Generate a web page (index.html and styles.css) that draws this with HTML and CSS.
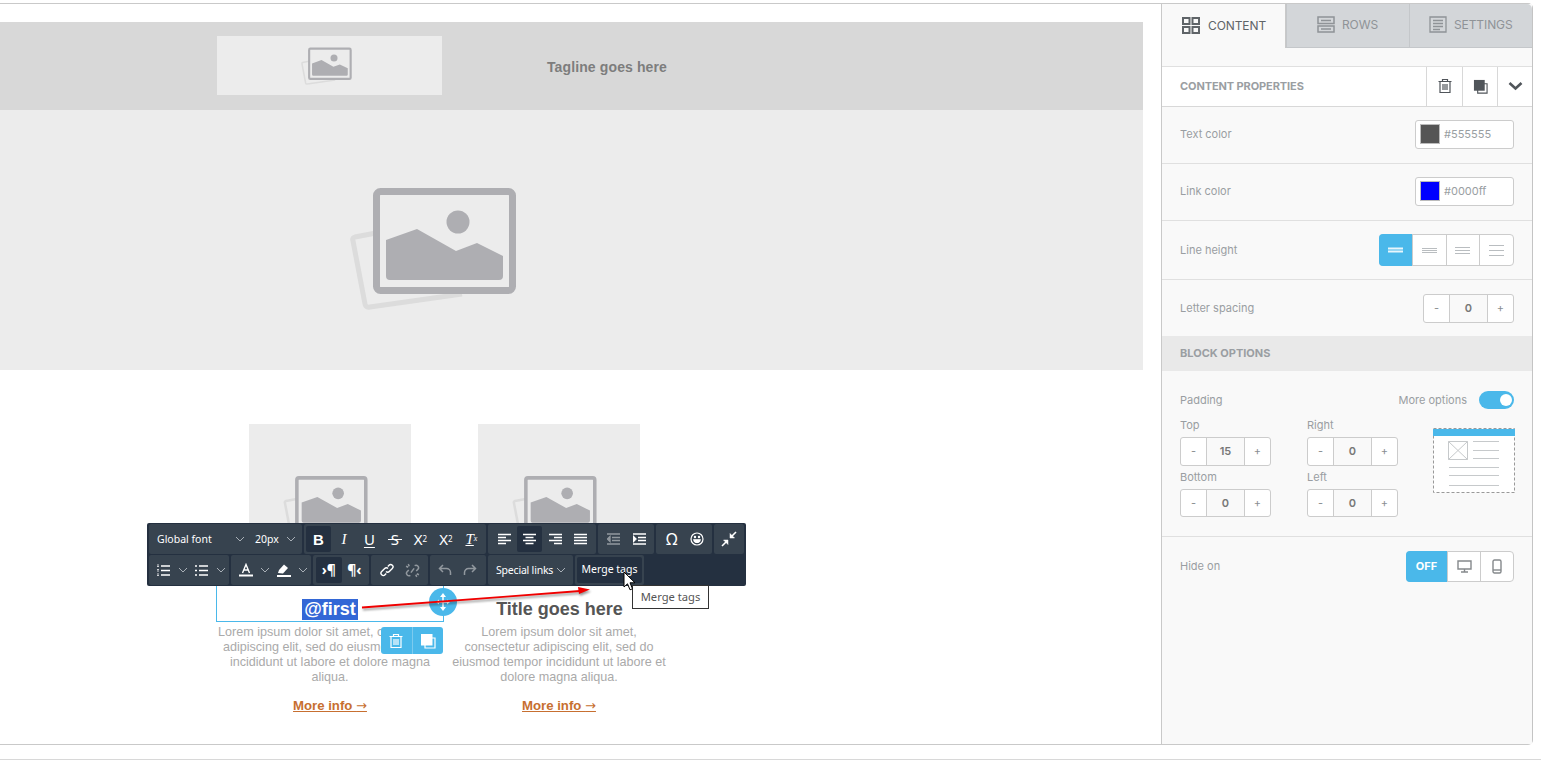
FILE: index.html
```html
<!DOCTYPE html>
<html lang="en">
<head>
  <meta charset="UTF-8">
  <title>Email builder</title>
  <link rel="stylesheet" href="styles.css">
</head>
<body>
  <svg class="defs" width="0" height="0">
    <symbol id="pic" viewBox="0 0 190 150">
      <path d="M36 63 L15 67 Q12 68 13 71 L25 134 Q26 138 30 137 L122 124" fill="none" stroke="#dcdcdc" stroke-width="5"/>
      <rect x="36.500" y="21.500" width="136" height="99" rx="4" fill="#ececec" stroke="#aeaeb2" stroke-width="7"/>
      <circle cx="118" cy="52" r="11.500" fill="#aeaeb2"/>
      <path d="M46 70 L77 59 L116 81 L137 73 L163 86 V106 Q163 110 159 110 H50 Q46 110 46 106 Z" fill="#aeaeb2"/>
    </symbol>
    <symbol id="trash" viewBox="0 0 16 16">
      <path d="M1.500 3.500h13M5.500 3.500V1.500h5v2M3 3.500v11h10v-11M6 6v6M8 6v6M10 6v6" fill="none" stroke="currentColor" stroke-width="1.200"/>
    </symbol>
    <symbol id="copy" viewBox="0 0 16 16">
      <path d="M5 5h10v10H5z" fill="none" stroke="currentColor" stroke-width="1.200"/>
      <path d="M1 1h11.500v11.500H1z" fill="currentColor"/>
    </symbol>
    <symbol id="chev" viewBox="0 0 10 6">
      <path d="M1 1l4 4 4-4" fill="none" stroke="currentColor" stroke-width="1"/>
    </symbol>
  </svg>

  <div class="frame">
    <main class="canvas">
      <div class="band">
        <div class="logo-box"><svg class="pic-small"><use href="#pic"/></svg></div>
        <div class="tagline">Tagline goes here</div>
      </div>
      <div class="hero"><svg class="pic-large"><use href="#pic"/></svg></div>
      <div class="cols">
        <div class="col col-first">
          <div class="thumb"><svg class="pic-mid"><use href="#pic"/></svg></div>
          <div class="title-box selected"><span class="sel">@first</span></div>
          <p class="lorem">Lorem ipsum dolor sit amet, consectetur adipiscing elit, sed do eiusmod tempor incididunt ut labore et dolore magna aliqua.</p>
          <a class="more">More info <span class="arr">→</span></a>
        </div>
        <div class="col col-second">
          <div class="thumb"><svg class="pic-mid"><use href="#pic"/></svg></div>
          <div class="title-box">Title goes here</div>
          <p class="lorem">Lorem ipsum dolor sit amet, consectetur adipiscing elit, sed do eiusmod tempor incididunt ut labore et dolore magna aliqua.</p>
          <a class="more">More info <span class="arr">→</span></a>
        </div>
      </div>
    </main>

    <aside class="side">
      <div class="tabs">
        <div class="tab active tab-content">
          <svg width="18" height="17" viewBox="0 0 18 17" fill="none" stroke="currentColor" stroke-width="2"><path d="M1 1h6.500v6H1zM10.500 1H17v6h-6.500zM1 10h6.500v6H1zM10.500 10H17v6h-6.500z"/></svg>
          CONTENT
        </div>
        <div class="tab tab-rows">
          <svg width="18" height="17" viewBox="0 0 18 17" fill="none" stroke="currentColor" stroke-width="1.500"><path d="M1 1h16v6.500H1zM1 10h16v6H1zM4 4.500h10M4 13h10"/></svg>
          ROWS
        </div>
        <div class="tab tab-settings">
          <svg width="18" height="17" viewBox="0 0 18 17" fill="none" stroke="currentColor" stroke-width="1.300"><path d="M1 1h16v15H1zM4 4.500h10M4 7.500h10M4 10.500h10M4 13.500h7"/></svg>
          SETTINGS
        </div>
      </div>
      <div class="tabs-gap"></div>

      <div class="prop-head">
        <span class="head-label">CONTENT PROPERTIES</span>
        <div class="head-btn"><svg width="16" height="16"><use href="#trash"/></svg></div>
        <div class="head-btn"><svg width="15" height="15"><use href="#copy"/></svg></div>
        <div class="head-btn"><svg width="15" height="10" viewBox="0 0 15 10"><path d="M1.500 2l6 5.500 6-5.500" fill="none" stroke="#50555a" stroke-width="2.600"/></svg></div>
      </div>

      <div class="row row-color">
        <span class="label">Text color</span>
        <div class="color-input"><i class="swatch swatch-grey"></i>#555555</div>
      </div>
      <div class="row row-color">
        <span class="label">Link color</span>
        <div class="color-input"><i class="swatch swatch-blue"></i>#0000ff</div>
      </div>
      <div class="row row-lh">
        <span class="label">Line height</span>
        <div class="btn-group lh">
          <div class="cell on"><svg width="15" height="6"><path d="M0 1.500h15M0 4.500h15" stroke="#e8f6fc" stroke-width="2"/></svg></div>
          <div class="cell"><svg width="15" height="5"><path d="M0 .5h15M0 2.500h15M0 4.500h15" stroke="#b9bdc0" stroke-width="1"/></svg></div>
          <div class="cell"><svg width="15" height="7"><path d="M0 .5h15M0 3.500h15M0 6.500h15" stroke="#b9bdc0" stroke-width="1"/></svg></div>
          <div class="cell"><svg width="15" height="11"><path d="M0 .5h15M0 5.500h15M0 10.500h15" stroke="#b9bdc0" stroke-width="1"/></svg></div>
        </div>
      </div>
      <div class="row row-ls">
        <span class="label">Letter spacing</span>
        <div class="stepper"><span>-</span><b>0</b><span>+</span></div>
      </div>

      <div class="block-head">BLOCK OPTIONS</div>

      <div class="padding">
        <div class="padding-top">
          <span class="label">Padding</span>
          <div class="more-opts">
            <span class="label">More options</span>
            <div class="toggle"><i></i></div>
          </div>
        </div>
        <div class="padding-body">
          <div class="pad-grid">
            <div class="pad-field"><span class="label">Top</span><div class="stepper"><span>-</span><b>15</b><span>+</span></div></div>
            <div class="pad-field"><span class="label">Right</span><div class="stepper"><span>-</span><b>0</b><span>+</span></div></div>
            <div class="pad-field"><span class="label">Bottom</span><div class="stepper"><span>-</span><b>0</b><span>+</span></div></div>
            <div class="pad-field"><span class="label">Left</span><div class="stepper"><span>-</span><b>0</b><span>+</span></div></div>
          </div>
          <svg class="diagram" width="82" height="65" viewBox="0 0 82 65">
            <rect x="0.500" y="0.500" width="81" height="64" fill="#fff" stroke="#999" stroke-dasharray="3 2"/>
            <rect x="0" y="1" width="82" height="7" fill="#4ab8ea"/>
            <g fill="none" stroke="#c6c9cb">
              <path d="M15.500 13.500h19v18h-19zM15.500 13.500l19 18M34.500 13.500l-19 18"/>
              <path d="M40 13.500h26M40 22.500h26M40 30.500h26M16 39.500h50M16 47.500h50M16 57.500h50"/>
            </g>
          </svg>
        </div>
      </div>

      <div class="row row-hide">
        <span class="label">Hide on</span>
        <div class="btn-group hide">
          <div class="cell on off">OFF</div>
          <div class="cell"><svg width="15" height="13" viewBox="0 0 15 13" fill="none" stroke="#85898c" stroke-width="1.400"><path d="M1 1h13v8H1z"/><path d="M7.500 9v3M4 12h7"/></svg></div>
          <div class="cell"><svg width="10" height="15" viewBox="0 0 10 15" fill="none" stroke="#85898c" stroke-width="1.400"><rect x="1" y="1" width="8" height="13" rx="1.500"/><path d="M1 11h8"/></svg></div>
        </div>
      </div>
    </aside>
  </div>
  <div class="foot-line"></div>

  <!-- text editor toolbar floating above the canvas -->
  <div class="toolbar">
    <div class="tb-row">
      <div class="tb-group w-font">
        <span class="tb-select font-name">Global font<svg class="caret"><use href="#chev"/></svg></span>
        <span class="tb-select font-size">20px<svg class="caret"><use href="#chev"/></svg></span>
      </div>
      <div class="tb-group w-format">
        <div class="tb-btn active glyph-b">B</div>
        <div class="tb-btn glyph-i">I</div>
        <div class="tb-btn glyph-u">U</div>
        <div class="tb-btn glyph-s">S</div>
        <div class="tb-btn glyph-x">X<sup>2</sup></div>
        <div class="tb-btn glyph-x">X<sub>2</sub></div>
        <div class="tb-btn glyph-t"><span>T</span><sub>x</sub></div>
      </div>
      <div class="tb-group w-align">
        <div class="tb-btn"><svg width="13" height="12" stroke="#fff" stroke-width="1.500"><path d="M0 1.500h13M0 4.500h8M0 7.500h13M0 10.500h8"/></svg></div>
        <div class="tb-btn active"><svg width="13" height="12" stroke="#fff" stroke-width="1.500"><path d="M0 1.500h13M2.500 4.500h8M0 7.500h13M2.500 10.500h8"/></svg></div>
        <div class="tb-btn"><svg width="13" height="12" stroke="#fff" stroke-width="1.500"><path d="M0 1.500h13M5 4.500h8M0 7.500h13M5 10.500h8"/></svg></div>
        <div class="tb-btn"><svg width="13" height="12" stroke="#fff" stroke-width="1.500"><path d="M0 1.500h13M0 4.500h13M0 7.500h13M0 10.500h13"/></svg></div>
      </div>
      <div class="tb-group w-indent">
        <div class="tb-btn dim"><svg width="13" height="12" stroke="#fff" stroke-width="1.300" fill="#fff"><path d="M0 1h13M5 4.500h8M5 7.500h8M0 11h13M3 3.500L0.500 6 3 8.500z"/></svg></div>
        <div class="tb-btn"><svg width="13" height="12" stroke="#fff" stroke-width="1.300" fill="#fff"><path d="M0 1h13M5 4.500h8M5 7.500h8M0 11h13M0.500 3.500L3 6 0.500 8.500z"/></svg></div>
      </div>
      <div class="tb-group w-special">
        <div class="tb-btn glyph-o">Ω</div>
        <div class="tb-btn"><svg width="14" height="14" viewBox="0 0 14 14" fill="none" stroke="#fff" stroke-width="1.200"><circle cx="7" cy="7" r="6"/><path d="M3.800 7.800h6.400Q9.500 10.500 7 10.500T3.800 7.800z" fill="#fff"/><circle cx="5" cy="5" r=".6"/><circle cx="9" cy="5" r=".6"/></svg></div>
      </div>
      <div class="tb-group w-collapse">
        <div class="tb-btn"><svg width="16" height="16" viewBox="0 0 16 16" fill="#fff" stroke="#fff" stroke-width="1.600"><path d="M15 1L10 6" fill="none"/><path d="M9 2.500V7h4.500z" stroke-width=".5"/><path d="M1 15l5-5" fill="none"/><path d="M7 13.500V9H2.500z" stroke-width=".5"/></svg></div>
      </div>
    </div>
    <div class="tb-row">
      <div class="tb-group w-lists">
        <div class="tb-btn narrow"><svg width="13" height="13" stroke="#fff" fill="#fff"><path d="M4 2h9M4 6.500h9M4 11h9" stroke-width="1.500"/><path d="M1 0.500v3M1 5v3M1 9.500v3" stroke-width="1.500" stroke-dasharray="1 .5"/></svg></div>
        <svg class="caret"><use href="#chev"/></svg>
        <div class="tb-btn narrow"><svg width="13" height="13" stroke="#fff"><path d="M4 2h9M4 6.500h9M4 11h9M0 2h2M0 6.500h2M0 11h2" stroke-width="1.600"/></svg></div>
        <svg class="caret"><use href="#chev"/></svg>
      </div>
      <div class="tb-group w-color">
        <div class="tb-btn narrow"><svg width="14" height="15" viewBox="0 0 14 15"><path d="M3.500 10L7 1.500 10.500 10M4.800 7h4.400" fill="none" stroke="#fff" stroke-width="1.400"/><path d="M0 12.500h14" stroke="#fff" stroke-width="2"/></svg></div>
        <svg class="caret"><use href="#chev"/></svg>
        <div class="tb-btn narrow"><svg width="14" height="15" viewBox="0 0 14 15"><path d="M1 10l1-3 5-5.500 4 3.500-5 5.500z" fill="#fff"/><path d="M0 13h14" stroke="#fff" stroke-width="2"/></svg></div>
        <svg class="caret"><use href="#chev"/></svg>
      </div>
      <div class="tb-group w-para">
        <div class="tb-btn active glyph-p">›¶</div>
        <div class="tb-btn glyph-p">¶‹</div>
      </div>
      <div class="tb-group w-link">
        <div class="tb-btn"><svg width="14" height="14" viewBox="0 0 14 14" fill="none" stroke="#fff" stroke-width="1.400"><path d="M6 8.500a2.300 2.300 0 0 0 3.300 0l3-3a2.300 2.300 0 0 0-3.300-3.300L7.800 3.400M8 5.500a2.300 2.300 0 0 0-3.300 0l-3 3a2.300 2.300 0 0 0 3.300 3.300l1.200-1.200"/></svg></div>
        <div class="tb-btn dim"><svg width="15" height="15" viewBox="0 0 14 14" fill="none" stroke="#fff" stroke-width="1.400"><path d="M9 2.500a2.300 2.300 0 0 1 3.200 3.200L10.500 7.500M5 11.500a2.300 2.300 0 0 1-3.200-3.200L3.500 6.500M5.500 9l3-4M1 3l2 1M3 1l1 2M13 11l-2-1M11 13l-1-2"/></svg></div>
      </div>
      <div class="tb-group w-undo">
        <div class="tb-btn dim"><svg width="14" height="12" viewBox="0 0 14 12" fill="none" stroke="#fff" stroke-width="1.500"><path d="M5 1L1.500 4.500 5 8M2 4.500h6.500a4 4 0 0 1 4 4V11"/></svg></div>
        <div class="tb-btn dim"><svg width="14" height="12" viewBox="0 0 14 12" fill="none" stroke="#fff" stroke-width="1.500"><path d="M9 1l3.500 3.500L9 8M12 4.500H5.500a4 4 0 0 0-4 4V11"/></svg></div>
      </div>
      <div class="tb-group w-links">
        <span class="tb-select special">Special links<svg class="caret"><use href="#chev"/></svg></span>
      </div>
      <div class="tb-group w-merge">
        <div class="tb-btn active merge">Merge tags</div>
      </div>
    </div>
  </div>

  <div class="tooltip">Merge tags</div>

  <div class="move-handle">
    <svg width="16" height="18" viewBox="0 0 16 18" fill="#fff"><path d="M8 0l3 4H5zM8 18l-3-4h6zM1 9l3-2.500v5zM15 9l-3 2.500v-5z"/><path d="M8 3v12M4 9h8" stroke="#fff" stroke-width="1.500"/></svg>
  </div>

  <div class="block-actions">
    <div class="action"><svg width="16" height="16"><use href="#trash"/></svg></div>
    <div class="action"><svg width="16" height="16"><use href="#copy"/></svg></div>
  </div>

  <svg class="arrow" width="240" height="30" viewBox="0 0 240 30">
    <path d="M2 20.500L220 4" stroke="#f00000" stroke-width="1.800"/>
    <path d="M230 2.500L218 0 219 7z" fill="#f00000"/>
  </svg>

  <svg class="cursor" width="14" height="21" viewBox="0 0 14 21">
    <path d="M1 1v15l3.500-3.200 2.500 6 2.500-1-2.500-6H12z" fill="#fff" stroke="#000" stroke-width="1"/>
  </svg>
</body>
</html>
```

FILE: styles.css
```css
* {
  box-sizing: border-box;
}

body {
  margin: 0;
  height: 761px;
  overflow: hidden;
  background: #fff;
  font-family: "Liberation Sans", Arial, sans-serif;
}

.defs {
  position: absolute;
}

.frame {
  display: flex;
  height: 742px;
  margin-top: 3px;
  width: 1533px;
  border-top: 1px solid #c9c9c9;
  border-bottom: 1px solid #c9c9c9;
  border-right: 1px solid #c4c4c4;
  border-radius: 0 5px 5px 0;
}

.foot-line {
  height: 1px;
  margin-top: 14px;
  background: #d8d8d8;
}

/* canvas */
.canvas {
  width: 1161px;
  padding-top: 18px;
  flex: none;
}

.band {
  display: flex;
  align-items: flex-start;
  width: 1143px;
  height: 88px;
  background: #d8d8d8;
}

.logo-box {
  display: flex;
  align-items: center;
  justify-content: center;
  width: 225px;
  height: 59px;
  margin: 14px 0 0 217px;
  background: #ececec;
}

.pic-small {
  width: 58px;
  height: 46px;
  margin: 0 5px 2px 0;
}

.tagline {
  width: 330px;
  margin-top: 37px;
  text-align: center;
  font-size: 14px;
  font-weight: bold;
  letter-spacing: .12px;
  color: #7d7d7d;
}

.hero {
  width: 1143px;
  height: 260px;
  padding: 60px 0 0 340px;
  background: #ececec;
}

.pic-large {
  display: block;
  width: 190px;
  height: 150px;
}

.cols {
  display: flex;
  padding: 54px 0 0 216px;
}

.col {
  width: 229px;
  text-align: center;
}

.thumb {
  display: flex;
  align-items: center;
  justify-content: center;
  width: 162px;
  height: 162px;
  margin-left: 33px;
  background: #ececec;
}

.pic-mid {
  width: 97px;
  height: 76px;
  margin-right: 7px;
}

.title-box {
  height: 36px;
  padding-top: 13px;
  font-size: 18px;
  line-height: 21px;
  font-weight: bold;
  color: #555;
}

.title-box.selected {
  width: 228px;
  border: 1px solid #4ab8ea;
  border-top: 0;
}

.sel {
  display: inline-block;
  padding: 0 2px;
  background: #3367d6;
  color: #fff;
}

.lorem {
  width: 228px;
  margin: 3px 0 0;
  font-size: 12.600px;
  line-height: 15px;
  color: #aaa;
}

.col-second .lorem {
  padding: 0 4px;
}

.more {
  display: block;
  width: 228px;
  margin-top: 12px;
  font-size: 13.200px;
  line-height: 17px;
  font-weight: bold;
  color: #c76f30;
  text-decoration: underline;
}

.arr {
  font-family: "DejaVu Sans", sans-serif;
  font-weight: normal;
  font-size: 13px;
}

/* sidebar */
.side {
  flex: 1;
  min-width: 0;
  border-left: 1px solid #c9c9c9;
  background: #f9f9f9;
  font-family: Inter, "Liberation Sans", sans-serif;
  font-size: 11px;
  color: #999ea2;
}

.tabs {
  display: flex;
  height: 44px;
}

.tab {
  display: flex;
  align-items: center;
  gap: 7px;
  padding-bottom: 2px;
  background: #d3d6d9;
  border-bottom: 1px solid #c4c7ca;
  border-left: 1px solid #c4c7ca;
  font-size: 12px;
  letter-spacing: -.1px;
  color: #8f9397;
}

.tab-content {
  width: 124px;
  padding-left: 20px;
}

.tab-rows {
  width: 123px;
  padding-left: 30px;
}

.tab-settings {
  flex: 1;
  padding-left: 19px;
  border-radius: 0 5px 0 0;
}

.tab.active {
  gap: 8px;
  background: #f9f9f9;
  border: 0;
  border-right: 1px solid #c9c9c9;
  color: #5f6468;
}

.tabs-gap {
  height: 18px;
}

.prop-head {
  display: flex;
  align-items: stretch;
  height: 41px;
  background: #fff;
  border-top: 1px solid #e0e0e0;
  border-bottom: 1px solid #d8d8d8;
}

.head-label {
  flex: 1;
  align-self: center;
  padding: 0 0 2px 18px;
  font-weight: 700;
  letter-spacing: -.1px;
  color: #9a9ea2;
}

.head-btn {
  display: flex;
  align-items: center;
  justify-content: center;
  width: 35px;
  padding-bottom: 1px;
  border-left: 1px solid #d8d8d8;
  color: #50555a;
}

.head-label + .head-btn {
  width: 36px;
}

.row {
  display: flex;
  align-items: center;
  justify-content: space-between;
  padding: 0 18px 2px;
  border-bottom: 1px solid #e0e0e0;
}

.row-color {
  height: 57px;
}

.row-lh {
  height: 59px;
  padding-bottom: 0;
}

.row-ls {
  height: 56px;
  padding-bottom: 0;
  border-bottom: 0;
}

.row-hide {
  height: 60px;
  border-bottom: 0;
}

.color-input {
  display: flex;
  align-items: center;
  gap: 4px;
  width: 99px;
  height: 29px;
  padding-left: 4px;
  background: #fff;
  border: 1px solid #ccc;
  border-radius: 3px;
}

.swatch {
  width: 20px;
  height: 20px;
  border: 1px solid #bbb;
}

.swatch-grey {
  background: #555;
}

.swatch-blue {
  background: #00f;
}

.btn-group {
  display: flex;
  background: #fff;
  border: 1px solid #ccc;
  border-radius: 4px;
}

.btn-group .cell {
  display: flex;
  align-items: center;
  justify-content: center;
  flex: 1;
  border-left: 1px solid #ccc;
}

.btn-group .on {
  margin: -1px 0 -1px -1px;
  background: #4ab8ea;
  border: 0;
  border-radius: 4px 0 0 4px;
}

.lh {
  width: 135px;
  height: 32px;
}

.hide {
  width: 108px;
  height: 31px;
}

.hide .off {
  flex: none;
  width: 41px;
  font-weight: 700;
  color: #fff;
}

.stepper {
  display: grid;
  grid-template-columns: 25px 1fr 25px;
  width: 91px;
  height: 29px;
  background: #fff;
  border: 1px solid #ccc;
  border-radius: 3px;
  line-height: 27px;
  text-align: center;
}

.stepper span {
  color: #8a8e92;
}

.stepper b {
  border-left: 1px solid #ccc;
  border-right: 1px solid #ccc;
  background: #f9f9f9;
  font-weight: 600;
  color: #777;
}

.block-head {
  height: 35px;
  padding-left: 18px;
  background: #e9e9e9;
  font-weight: 700;
  line-height: 34px;
  color: #9a9ea2;
}

.padding {
  height: 166px;
  padding: 20px 0 0 18px;
  border-bottom: 1px solid #e0e0e0;
}

.padding-top {
  display: flex;
  align-items: center;
  justify-content: space-between;
  height: 18px;
  margin-right: 18px;
}

.more-opts {
  display: flex;
  align-items: center;
  gap: 12px;
}

.toggle {
  display: flex;
  align-items: center;
  justify-content: flex-end;
  width: 35px;
  height: 18px;
  padding-right: 2px;
  background: #4ab8ea;
  border-radius: 9px;
}

.toggle i {
  width: 12px;
  height: 12px;
  background: #fff;
  border-radius: 50%;
}

.padding-body {
  display: flex;
  align-items: flex-start;
}

.pad-grid {
  display: grid;
  grid-template-columns: 91px 91px;
  column-gap: 36px;
  row-gap: 6px;
  margin-top: 11px;
}

.pad-field .label {
  display: block;
  height: 17px;
  line-height: 11px;
}

.pad-field:nth-child(n+3) .stepper {
  height: 28px;
  line-height: 26px;
}

.diagram {
  margin: 19px 0 0 35px;
}

/* toolbar */
.toolbar {
  position: absolute;
  left: 147px;
  top: 523px;
  width: 599px;
  height: 63px;
  padding: 1px 2px;
  background: #243040;
  border-radius: 2px;
  font-family: "Noto Sans", "Liberation Sans", sans-serif;
  font-size: 10.500px;
  color: #fff;
}

.tb-row {
  display: flex;
  gap: 2px;
  height: 30px;
  margin-bottom: 1px;
}

.tb-group {
  display: flex;
  align-items: center;
  padding: 0 2px;
  background: #37434f;
  border-radius: 2px;
}

.w-font { width: 153px; }
.w-format { width: 183px; padding-left: 2px; }
.w-align { width: 108px; padding-left: 3px; }
.w-indent { width: 56px; padding-left: 3px; }
.w-special { width: 56px; padding-left: 3px; }
.w-collapse { width: 30px; padding: 0; justify-content: center; }
.w-lists { width: 80px; }
.w-color { width: 80px; }
.w-para { width: 56px; padding-left: 3px; }
.w-link { width: 57px; padding-left: 3px; }
.w-undo { width: 56px; }
.w-links { width: 85px; }
.w-merge { width: 69px; }

.tb-btn {
  display: flex;
  align-items: center;
  justify-content: center;
  flex: none;
  width: 25.500px;
  height: 26px;
  border-radius: 2px;
}

.tb-btn.narrow {
  width: 25px;
}

.tb-btn.active {
  background: #243040;
}

.tb-btn.dim {
  opacity: .45;
}

.tb-select {
  display: flex;
  align-items: center;
  padding-bottom: 1px;
  white-space: nowrap;
}

.font-name {
  width: 94px;
  padding-left: 6px;
  justify-content: space-between;
}

.font-size {
  width: 51px;
  padding-left: 10px;
  justify-content: space-between;
}

.special {
  width: 100%;
  padding-left: 6px;
  padding-right: 5px;
  justify-content: space-between;
  letter-spacing: -.2px;
}

.caret {
  width: 10px;
  height: 6px;
  flex: none;
  color: #a9b0b7;
}

.w-lists .caret,
.w-color .caret {
  margin: 0 1px 0 2px;
}

.tb-group .tb-btn {
  font-size: 15px;
  line-height: 1;
}

.tb-group .merge {
  width: 65px;
  padding-bottom: 1px;
  font-size: 10.500px;
  white-space: nowrap;
}

.glyph-b {
  font-family: "Liberation Sans", sans-serif;
  font-weight: bold;
}

.glyph-i,
.glyph-t {
  font-family: "Liberation Serif", serif;
  font-style: italic;
}

.glyph-u {
  text-decoration: underline;
  text-underline-offset: 2px;
}

.glyph-t span {
  text-decoration: underline;
}

.glyph-s {
  position: relative;
}

.glyph-s::after {
  content: "";
  position: absolute;
  left: 6px;
  right: 6px;
  top: 13px;
  height: 1px;
  background: #fff;
}

.glyph-x sup,
.glyph-x sub,
.glyph-t sub {
  font-size: 8px;
  line-height: 0;
}

.tb-group .glyph-o {
  font-size: 16px;
}

.tb-group .glyph-p {
  font-size: 14px;
  font-weight: 700;
}

.tooltip {
  position: absolute;
  left: 632px;
  top: 585px;
  width: 77px;
  height: 24px;
  background: #fff;
  border: 1px solid #333;
  font-family: "Noto Sans", "Liberation Sans", sans-serif;
  font-size: 11.200px;
  line-height: 22px;
  text-align: center;
  color: #555;
}

.move-handle {
  position: absolute;
  left: 429px;
  top: 588px;
  display: flex;
  align-items: center;
  justify-content: center;
  width: 28px;
  height: 28px;
  background: #4ab8ea;
  border-radius: 50%;
}

.block-actions {
  position: absolute;
  left: 381px;
  top: 627px;
  display: flex;
  width: 62px;
  height: 27px;
  background: #4ab8ea;
  border-radius: 3px;
  color: #fff;
}

.action {
  display: flex;
  align-items: center;
  justify-content: center;
  flex: 1;
}

.action + .action {
  border-left: 1px solid #7ccbef;
}

.arrow {
  position: absolute;
  left: 360px;
  top: 587px;
  filter: drop-shadow(1px 2px 1px rgba(0, 0, 0, .4));
}

.cursor {
  position: absolute;
  left: 623px;
  top: 571px;
}
```
